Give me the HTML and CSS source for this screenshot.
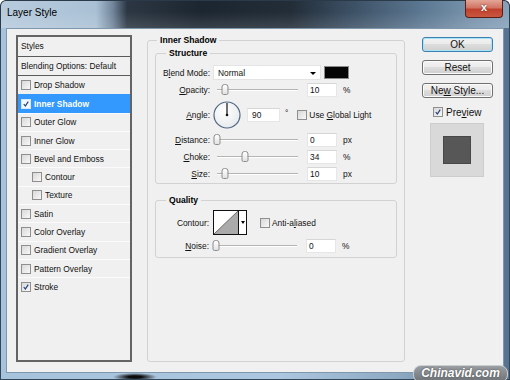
FILE: index.html
```html
<!DOCTYPE html>
<html lang="en">
<head>
    <meta charset="UTF-8">
    <title>Layer Style</title>
    <link rel="stylesheet" href="styles.css">
</head>
<body>

<div class="window">
    <!-- Title bar -->
    <div class="titlebar">
        <span class="title">Layer Style</span>
        <span class="close-btn">x</span>
    </div>

    <div class="dialog">
        <!-- Styles list -->
        <ul class="style-list">
            <li class="list-head">Styles</li>
            <li class="list-head">Blending Options: Default</li>
            <li><span class="check"></span>Drop Shadow</li>
            <li class="selected"><span class="check on"><svg viewBox="0 0 10 10"><path d="M2.2 5 L4.2 7.6 L7.8 2"/></svg></span>Inner Shadow</li>
            <li><span class="check"></span>Outer Glow</li>
            <li><span class="check"></span>Inner Glow</li>
            <li><span class="check"></span>Bevel and Emboss</li>
            <li class="sub"><span class="check"></span>Contour</li>
            <li class="sub"><span class="check"></span>Texture</li>
            <li><span class="check"></span>Satin</li>
            <li><span class="check"></span>Color Overlay</li>
            <li><span class="check"></span>Gradient Overlay</li>
            <li><span class="check"></span>Pattern Overlay</li>
            <li><span class="check on"><svg viewBox="0 0 10 10"><path d="M2.2 5 L4.2 7.6 L7.8 2"/></svg></span>Stroke</li>
        </ul>

        <!-- Settings -->
        <fieldset class="group main-group">
            <legend>Inner Shadow</legend>

            <fieldset class="group structure">
                <legend>Structure</legend>

                <div class="row">
                    <label class="lbl">B<u>l</u>end Mode:</label>
                    <div class="select">Normal<span class="arrow"></span></div>
                    <span class="swatch"></span>
                </div>

                <div class="row">
                    <label class="lbl"><u>O</u>pacity:</label>
                    <div class="slider"><span class="thumb" style="left: 10%"></span></div>
                    <input class="num" type="text" value="10">
                    <span class="unit">%</span>
                </div>

                <div class="row angle-row">
                    <label class="lbl"><u>A</u>ngle:</label>
                    <svg class="dial" width="28" height="28" viewBox="0 0 28 28">
                        <defs>
                            <radialGradient id="dialFill" cx="40%" cy="35%" r="70%">
                                <stop offset="0" stop-color="#ffffff"/>
                                <stop offset="1" stop-color="#e6e9ec"/>
                            </radialGradient>
                        </defs>
                        <circle cx="14" cy="14" r="13" fill="url(#dialFill)" stroke="#4f6983" stroke-width="1.2"/>
                        <line x1="14" y1="14" x2="14" y2="2" stroke="#111" stroke-width="1.2"/>
                        <circle cx="14" cy="14" r="1.3" fill="#111"/>
                    </svg>
                    <input class="num angle-num" type="text" value="90">
                    <span class="degree">°</span>
                    <span class="check global"></span>
                    <span class="check-label">Use <u>G</u>lobal Light</span>
                </div>

                <div class="row">
                    <label class="lbl"><u>D</u>istance:</label>
                    <div class="slider"><span class="thumb" style="left: 0%"></span></div>
                    <input class="num" type="text" value="0">
                    <span class="unit">px</span>
                </div>

                <div class="row">
                    <label class="lbl"><u>C</u>hoke:</label>
                    <div class="slider"><span class="thumb" style="left: 34%"></span></div>
                    <input class="num" type="text" value="34">
                    <span class="unit">%</span>
                </div>

                <div class="row">
                    <label class="lbl"><u>S</u>ize:</label>
                    <div class="slider"><span class="thumb" style="left: 10%"></span></div>
                    <input class="num" type="text" value="10">
                    <span class="unit">px</span>
                </div>
            </fieldset>

            <fieldset class="group quality">
                <legend>Quality</legend>

                <div class="row contour-row">
                    <label class="lbl q-lbl">Contour:</label>
                    <div class="contour">
                        <svg width="24" height="23" viewBox="0 0 24 23">
                            <polygon points="0,23 24,0 24,23" fill="#aaaaaa"/>
                            <line x1="0" y1="23" x2="24" y2="0" stroke="#6d6d6d" stroke-width="1"/>
                        </svg>
                        <span class="contour-arrow"><span class="arrow"></span></span>
                    </div>
                    <span class="check anti"></span>
                    <span class="check-label">Anti-a<u>l</u>iased</span>
                </div>

                <div class="row noise-row">
                    <label class="lbl q-lbl"><u>N</u>oise:</label>
                    <div class="slider"><span class="thumb" style="left: 0%"></span></div>
                    <input class="num" type="text" value="0">
                    <span class="unit">%</span>
                </div>
            </fieldset>
        </fieldset>

        <!-- Buttons -->
        <div class="side">
            <button class="btn default">OK</button>
            <button class="btn">Reset</button>
            <button class="btn">Ne<u>w</u> Style...</button>
            <div class="preview-row">
                <span class="check on"><svg viewBox="0 0 10 10"><path d="M2.2 5 L4.2 7.6 L7.8 2"/></svg></span>
                <span class="preview-label">Pre<u>v</u>iew</span>
            </div>
            <div class="preview-box"><span class="preview-square"></span></div>
        </div>
    </div>

    <div class="watermark">Chinavid.com</div>
</div>

</body>
</html>
```

FILE: styles.css
```css
* {
    box-sizing: border-box;
}

body {
    margin: 0;
    background: #fff;
    font-family: "Liberation Sans", Arial, sans-serif;
    font-size: 8.4px;
    color: #111;
}

/* Window frame */
.window {
    position: relative;
    width: 510px;
    height: 380px;
    display: flex;
    flex-direction: column;
    padding: 0 6px 7px;
    border-radius: 6px 6px 0 0;
    overflow: hidden;
    background:
        radial-gradient(22px 4px at 135px 377px, #0b0b0b 30%, rgba(0, 0, 0, 0) 100%),
        linear-gradient(90deg, #a7c3dc 0%, #abc6de 55%, #8ea9c2 78%, #56718d 100%);
    box-shadow: inset 0 0 0 1px #33475b;
}

.titlebar {
    height: 28px;
    margin: 0 -6px;
    display: flex;
    align-items: flex-start;
    border-radius: 6px 6px 0 0;
    border: 1px solid #2b3a49;
    border-bottom: none;
    background:
        linear-gradient(rgba(255, 255, 255, 0) 40%, rgba(255, 255, 255, 0.12) 100%),
        linear-gradient(90deg, #b7cbdd 0, #aac1d5 95px, #71849a 112px, #2c3743 126px, #1c2630 200px, #222d38 290px, #3a4d61 345px, #5b7791 420px, #7893ac 470px, #88a3bb 510px);
}

.title {
    margin: 6px 0 0 6px;
    font-size: 10px;
    line-height: 12px;
    color: #000;
}

.close-btn {
    margin-left: auto;
    margin-right: 6px;
    margin-top: -1px;
    width: 38px;
    height: 18px;
    border: 1px solid #5c1d14;
    border-top: none;
    border-radius: 0 0 4px 4px;
    background: linear-gradient(#e3a597 0%, #d27565 45%, #c0412d 55%, #c9573f 100%);
    color: #fff;
    font-weight: bold;
    font-size: 11px;
    line-height: 15px;
    text-align: center;
    text-shadow: 0 0 2px #5c1d14;
}

.dialog {
    flex: 1;
    display: flex;
    align-items: flex-start;
    padding-top: 6px;
    background: #f0f0f0;
    border: 1px solid #7f97ad;
}

/* Styles list */
.style-list {
    list-style: none;
    margin: 0 0 0 9px;
    padding: 0;
    width: 116px;
    height: 327px;
    border: 2px solid #646464;
    background: #f0f0f0;
}

.style-list li {
    display: flex;
    align-items: center;
    height: 18.3px;
    padding-left: 3px;
    border-top: 1px solid #fbfbfb;
}

.style-list .list-head {
    height: 19.5px;
    border-top: none;
    border-bottom: 1px solid #5a5a5a;
}

.style-list .list-head + li:not(.list-head) {
    border-top: none;
}

.style-list .sub {
    padding-left: 14px;
}

.style-list .selected {
    background: #3399ff;
    color: #fff;
    font-weight: bold;
    border-top-color: #3399ff;
}

/* Checkbox */
.check {
    flex: none;
    display: inline-block;
    width: 10px;
    height: 10px;
    margin-right: 3px;
    border: 1px solid #8f8f8f;
    background: linear-gradient(135deg, #d8d8d8, #f8f8f8);
}

.check svg {
    display: block;
    width: 8px;
    height: 8px;
}

.check path {
    fill: none;
    stroke: #24407a;
    stroke-width: 1.5;
}

.selected .check {
    background: #f4f8ff;
    border-color: #d7e6fb;
}

/* Group boxes */
.group {
    margin: 0;
    padding: 0;
    border: 1px solid #d2d2d2;
    border-radius: 3px;
    min-inline-size: 0;
}

.group legend {
    padding: 0 3px;
    font-weight: bold;
    font-size: 8.6px;
    line-height: 11px;
    color: #000;
}

.main-group {
    margin-left: 15px;
    width: 258px;
    height: 327px;
    padding: 0 7px;
}

.main-group > legend {
    margin-left: 2px;
}

.structure {
    margin-top: 2px;
    height: 136px;
    padding-top: 5px;
}

.structure > legend,
.quality > legend {
    margin-left: 10px;
}

.quality {
    margin-top: 11px;
    height: 63px;
    padding-top: 4px;
}

.row {
    display: flex;
    align-items: center;
    height: 17px;
    white-space: nowrap;
}

.lbl {
    flex: none;
    width: 54px;
    text-align: right;
}

.q-lbl {
    width: 53px;
}

.select {
    position: relative;
    margin-left: 3px;
    width: 108px;
    height: 15px;
    padding-left: 4px;
    line-height: 14px;
    background: #fff;
    border: 1px solid #e4e4e4;
}

.select .arrow {
    position: absolute;
    right: 4px;
    top: 6px;
}

.arrow {
    display: inline-block;
    width: 0;
    height: 0;
    border-left: 3px solid transparent;
    border-right: 3px solid transparent;
    border-top: 3px solid #000;
}

.swatch {
    margin-left: 3px;
    width: 25px;
    height: 13px;
    background: #050505;
    border: 1px solid #8a8a8a;
}

/* Sliders */
.slider {
    position: relative;
    flex: none;
    margin-left: 7px;
    width: 81px;
    height: 11px;
}

.slider::before {
    content: "";
    position: absolute;
    left: 0;
    right: 0;
    top: 5px;
    height: 1px;
    background: #b4b4b4;
    box-shadow: 0 1px 0 #fff;
}

.thumb {
    position: absolute;
    top: 0;
    width: 7px;
    height: 11px;
    transform: translateX(-50%);
    border: 1px solid #8d8d8d;
    border-radius: 3px 3px 2px 2px;
    background: linear-gradient(#ffffff, #e2e2e2);
}

.num {
    flex: none;
    margin: 0 0 0 9px;
    width: 30px;
    height: 14px;
    padding: 0 0 0 2px;
    font: inherit;
    color: #111;
    background: #fff;
    border: 1px solid #e6e6e6;
    border-top-color: #d6d6d6;
    outline: none;
}

.unit {
    margin-left: 6px;
}

/* Angle */
.angle-row {
    height: 33px;
}

.dial {
    flex: none;
    margin-left: 3px;
}

.angle-num {
    margin-left: 6px;
    width: 33px;
    padding-left: 4px;
}

.degree {
    margin-left: 5px;
    margin-top: -3px;
}

.check.global {
    margin-left: 9px;
    margin-right: 2px;
}

/* Quality */
.contour-row {
    height: 25px;
}

.contour {
    display: flex;
    margin-left: 4px;
    width: 34px;
    height: 25px;
    border: 1px solid #111;
    background: #fff;
}

.contour svg {
    display: block;
}

.contour-arrow {
    display: flex;
    align-items: center;
    justify-content: center;
    width: 8px;
    border-left: 1px solid #111;
}

.contour-arrow .arrow {
    border-left-width: 2.5px;
    border-right-width: 2.5px;
}

.check.anti {
    margin-left: 13px;
    margin-right: 2px;
}

.noise-row {
    margin-top: 2px;
}

/* Right column */
.side {
    margin-left: 17px;
    width: 71px;
    display: flex;
    flex-direction: column;
    font-size: 10px;
}

.btn {
    height: 15px;
    margin: 8px 0 0;
    padding: 0;
    font: inherit;
    line-height: 13px;
    color: #111;
    border: 1px solid #707070;
    border-radius: 3px;
    background: linear-gradient(#f2f2f2 0%, #ebebeb 45%, #dddddd 50%, #cfcfcf 100%);
    box-shadow: inset 0 0 0 1px #fbfbfb;
}

.btn.default {
    margin-top: 2px;
    border-color: #3c7fb1;
    box-shadow: inset 0 0 0 1px #a9e3f7;
}

.preview-row {
    display: flex;
    align-items: center;
    height: 12px;
    margin: 8px 0 0 11px;
}

.preview-label {
    margin-left: 0;
}

.preview-box {
    display: flex;
    align-items: center;
    justify-content: center;
    margin: 5px 0 0 8px;
    width: 54px;
    height: 54px;
    background: #d9d9d9;
    border: 1px solid #cdcdcd;
}

.preview-square {
    width: 28px;
    height: 28px;
    background: #575757;
    border: 1px solid #474747;
}

/* Watermark */
.watermark {
    position: absolute;
    left: 413px;
    top: 365px;
    width: 95px;
    height: 18px;
    border-radius: 8px;
    border: 1px solid #c9ced3;
    background: linear-gradient(#9a9ea3, #6d7277);
    color: #fff;
    font-size: 12px;
    font-weight: bold;
    font-style: italic;
    line-height: 15px;
    text-align: center;
    text-shadow: 0 0 2px #444;
}
```
